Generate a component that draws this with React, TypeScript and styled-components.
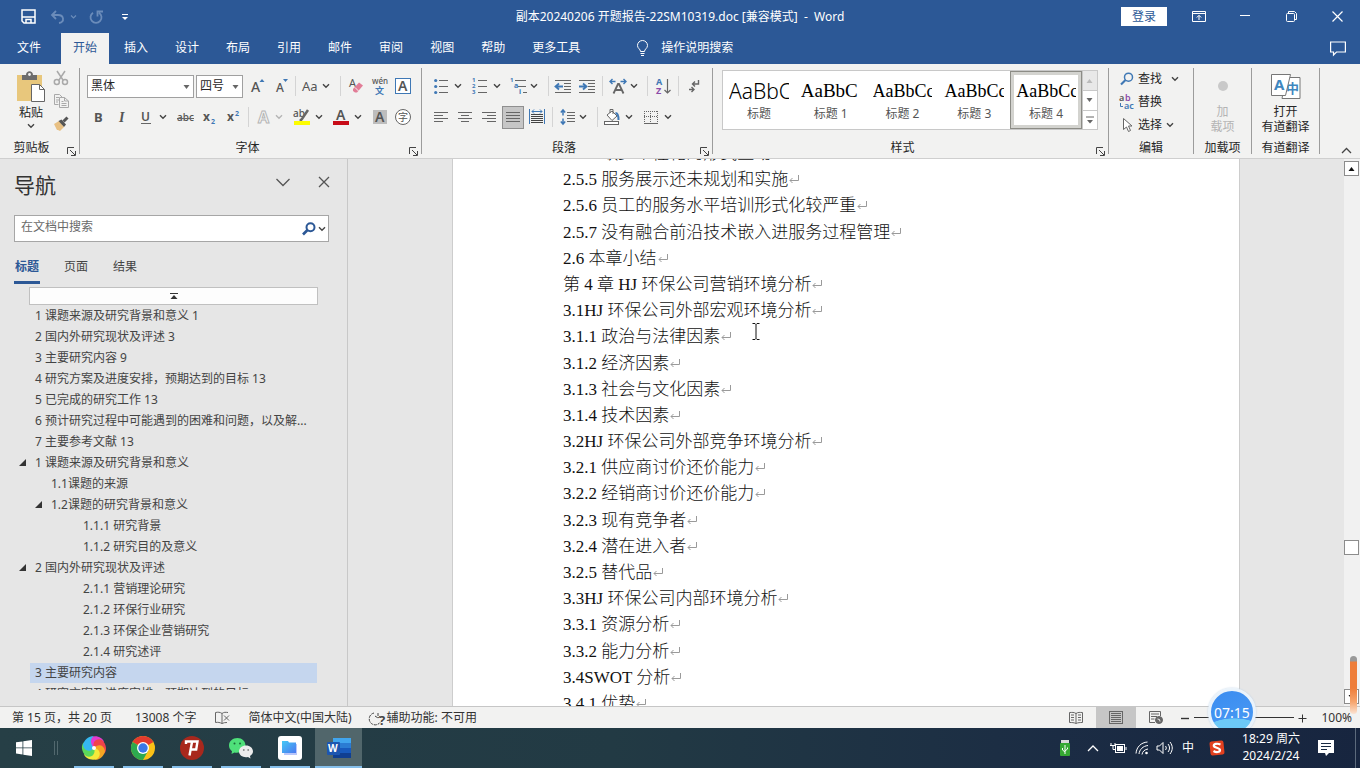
import React from 'react';
import styled, { createGlobalStyle, css } from 'styled-components';

const Global = createGlobalStyle`
  *, *::before, *::after { box-sizing: border-box; }
  html, body, #root { height: 100%; }
  body {
    margin: 0;
    background: #e6e6e6;
    color: #262626;
    font: 12px/16px "Noto Sans", "Noto Sans CJK SC", sans-serif;
  }
  button, input, select { font: inherit; color: inherit; margin: 0; padding: 0; border: 0; background: none; border-radius: 0; }
  h1, h2, ol, ul, p { margin: 0; padding: 0; font: inherit; list-style: none; }
  svg { display: block; flex: none; overflow: visible; }
`;

const Window = styled.div`
  height: 100vh;
  display: flex;
  flex-direction: column;
  overflow: hidden;
`;

/* ---------- title bar ---------- */
const TitleBar = styled.header`
  height: 33px;
  flex: none;
  display: grid;
  grid-template-columns: 1fr auto 1fr;
  align-items: center;
  background: #2c5896;
  color: #fff;
`;
const QuickAccess = styled.div`
  display: flex;
  align-items: center;
  gap: 14px;
  padding-left: 21px;
`;
const FileTitle = styled.h1`
  white-space: pre;
`;
const WindowControls = styled.div`
  display: flex;
  align-items: center;
  justify-content: flex-end;
`;
const SignIn = styled.button`
  width: 46px;
  height: 19px;
  margin-right: 9px;
  background: #fff;
  color: #2c5896;
  line-height: 19px;
`;
const WinButton = styled.button`
  width: 46px;
  height: 32px;
  display: flex;
  align-items: center;
  justify-content: center;
`;
const PlainButton = styled.button`
  display: flex;
  align-items: center;
  justify-content: center;
`;

/* ---------- tabs ---------- */
const TabBar = styled.nav`
  height: 31px;
  flex: none;
  display: flex;
  align-items: stretch;
  gap: 3px;
  padding: 0 14px 0 5px;
  background: #2c5896;
  color: #fff;
`;
const Tab = styled.button<{ $active?: boolean; $first?: boolean }>`
  padding: 0 12px 1px;
  margin-right: ${p => (p.$first ? '5px' : 0)};
  ${p => p.$active && css`background: #f2f2f1; color: #2c5896;`}
`;
const TellMe = styled.button`
  display: flex;
  align-items: center;
  gap: 12px;
  margin-left: 41px;
  padding-bottom: 1px;
`;
const CommentButton = styled(PlainButton)`
  margin-left: auto;
`;

/* ---------- ribbon ---------- */
const Ribbon = styled.section`
  height: 95px;
  flex: none;
  display: flex;
  padding: 4px 0;
  background: #f2f2f1;
  border-bottom: 1px solid #cfcfcf;
`;
const Group = styled.div<{ $w: number }>`
  width: ${p => p.$w}px;
  flex: none;
  display: flex;
  flex-direction: column;
  border-right: 1px solid #9c9c9c;
`;
const GroupBody = styled.div`
  flex: 1;
  min-height: 0;
`;
const Caption = styled.div<{ $shift: number }>`
  height: 14px;
  display: grid;
  grid-template-columns: minmax(0, 1fr) auto minmax(${p => p.$shift}px, 1fr);
  align-items: center;
  white-space: nowrap;
  ${p => p.$shift > 0 && css`
    grid-template-columns: minmax(0, 1fr) auto calc(50% - 18px + ${p.$shift}px);
  `}
`;
const Launcher = styled.button`
  grid-column: 3;
  justify-self: end;
  align-self: end;
  padding-right: 3px;
`;
const ToolRow = styled.div<{ $top: number }>`
  height: 24px;
  margin-top: ${p => p.$top}px;
  display: flex;
  align-items: center;
`;
const Tool = styled.button<{ $w: number; $gap: number; $on?: boolean }>`
  width: ${p => p.$w}px;
  height: 23px;
  margin-left: ${p => p.$gap}px;
  flex: none;
  display: flex;
  align-items: center;
  justify-content: center;
  ${p => p.$on && css`background: #c6c6c6; border: 1px solid #8f8f8f;`}
`;
const Sep = styled.span<{ $gap: number }>`
  width: 1px;
  height: 20px;
  margin-left: ${p => p.$gap}px;
  background: #d4d4d4;
`;
const Combo = styled.span<{ $w: number; $gap: number }>`
  position: relative;
  width: ${p => p.$w}px;
  margin-left: ${p => p.$gap}px;
  select {
    width: 100%;
    height: 23px;
    padding-left: 3px;
    appearance: none;
    background: #fff;
    border: 1px solid #a0a0a0;
  }
  svg { position: absolute; right: 4px; top: 10px; pointer-events: none; }
`;

const ClipBody = styled(GroupBody)`
  display: flex;
  gap: 7px;
  padding-left: 16px;
`;
const Paste = styled.button`
  display: flex;
  flex-direction: column;
  align-items: center;
  gap: 2px;
  width: 30px;
  padding-top: 3px;
  justify-content: flex-start;
`;
const ClipTools = styled.div`
  display: flex;
  flex-direction: column;
  gap: 7px;
  padding-top: 2px;
`;

const Gallery = styled.div`
  display: flex;
  height: 60px;
  margin: 2px 10px 0 9px;
  background: #fff;
  border: 1px solid #c8c8c8;
`;
const StyleCard = styled.button<{ $on?: boolean; $size: number; $sans?: boolean }>`
  flex: 1;
  min-width: 0;
  padding: 7px 6px 0;
  ${p => p.$on && css`border: 1px solid #8c8c86; box-shadow: inset 0 0 0 3px #d3d3cf; padding: 6px 5px 0;`}
  display: flex;
  flex-direction: column;
  justify-content: flex-start;
  color: #555;
  span {
    overflow: hidden;
    height: 28px;
    text-align: left;
    color: #000;
    font: ${p => p.$size}px/26px ${p => (p.$sans ? '"Noto Sans", sans-serif' : '"Liberation Serif", serif')};
    font-weight: ${p => (p.$sans ? 300 : 400)};
  }
  em { font-style: normal; text-align: center; }
`;
const GalleryScroll = styled.div`
  width: 15px;
  display: grid;
  grid-template-rows: 1fr 1fr 1fr;
  border-left: 1px solid #c8c8c8;
  button { display: flex; align-items: center; justify-content: center; }
  button + button { border-top: 1px solid #c8c8c8; }
  button:first-child { background: #e8e8e8; }
`;
const EditList = styled(GroupBody)`
  display: flex;
  flex-direction: column;
  padding-left: 11px;
`;
const EditItem = styled.button<{ $gap?: number }>`
  height: 23px;
  padding-bottom: 2px;
  display: flex;
  align-items: center;
  gap: 4px;
  svg:last-child:not(:first-child) { margin-left: ${p => p.$gap || 0}px; }
`;
const BigTool = styled.button<{ $muted?: boolean }>`
  width: 100%;
  display: flex;
  flex-direction: column;
  align-items: center;
  line-height: 15px;
  gap: 4px;
  padding-top: 5px;
  color: ${p => (p.$muted ? '#b4b4b4' : 'inherit')};
`;
const RibbonEnd = styled.div`
  flex: 1;
  display: flex;
  align-items: flex-end;
  justify-content: flex-end;
  padding: 0 8px 0 0;
`;

/* ---------- workspace ---------- */
const Workspace = styled.div`
  flex: 1;
  min-height: 0;
  display: flex;
`;
const NavPane = styled.aside`
  width: 348px;
  flex: none;
  display: flex;
  flex-direction: column;
  border-right: 1px solid #c8c8c8;
  color: #444;
`;
const NavHead = styled.div`
  display: flex;
  align-items: center;
  height: 48px;
  padding: 4px 17px 0 14px;
  gap: 28px;
  h2 { flex: 1; font-size: 21px; line-height: 28px; color: #333; }
  button { padding-bottom: 6px; }
`;
const SearchBox = styled.label`
  height: 27px;
  margin: 8px 18px 0 14px;
  padding: 0 2px 0 6px;
  display: flex;
  align-items: center;
  gap: 2px;
  background: #fff;
  border: 1px solid #a6a6a6;
  input { flex: 1; min-width: 0; outline: 0; padding-bottom: 3px; }
  input::placeholder { color: #6a6a6a; opacity: 1; }
`;
const NavTabs = styled.div`
  display: flex;
  gap: 23px;
  height: 42px;
  padding: 15px 14px 0;
`;
const NavTab = styled.button<{ $on?: boolean }>`
  width: 26px;
  height: 27px;
  padding-bottom: 5px;
  border-bottom: 3px solid ${p => (p.$on ? '#2c5896' : 'transparent')};
  color: ${p => (p.$on ? '#2c5896' : '#444')};
  font-weight: ${p => (p.$on ? 700 : 400)};
`;
const JumpTop = styled.button`
  height: 18px;
  margin: 3px 29px 0;
  flex: none;
  display: flex;
  align-items: center;
  justify-content: center;
  background: #fdfdfd;
  border: 1px solid #c0c0c0;
`;
const Tree = styled.ul`
  flex: 1;
  min-height: 0;
  overflow: hidden;
  margin: 0 30px 16px 0;
`;
const TreeItem = styled.li<{ $level: number; $on?: boolean }>`
  height: 21px;
  display: flex;
  align-items: center;
  gap: 10px;
  padding-left: ${p => [0, 19, 35, 67][p.$level]}px;
  line-height: 20px;
  background: ${p => (p.$on ? 'linear-gradient(to right, transparent 30px, #c5d6ee 30px) 0 1px / 100% 20px no-repeat' : 'none')};
  span { width: 6px; flex: none; }
  a { color: inherit; text-decoration: none; white-space: nowrap; }
`;

const Canvas = styled.main`
  flex: 1;
  min-width: 0;
  display: flex;
  justify-content: center;
  overflow: hidden;
`;
const Sheet = styled.article`
  position: relative;
  width: 788px;
  display: flex;
  background: #fff;
  border: solid #cdcdcd;
  border-width: 0 1px;
  overflow: hidden;
`;
const Lines = styled.ol`
  flex: 1;
  margin: -18px 0 -11px;
  padding-left: 110px;
  display: grid;
  grid-auto-rows: 1fr;
`;
const Line = styled.li`
  display: flex;
  align-items: center;
  color: #111;
  font: 17px/26px "Liberation Serif", "Noto Sans CJK SC", serif;
  font-weight: 300;
  white-space: pre;
`;
const TextCursor = styled.svg`
  position: absolute;
  left: 299px;
  top: 164px;
`;
const ScrollBar = styled.div`
  width: 16px;
  flex: none;
  display: flex;
  flex-direction: column;
  background: #f1f1f1;
  padding: 2px 1px 2px 0;
`;
const ScrollButton = styled.button`
  height: 15px;
  flex: none;
  display: flex;
  align-items: center;
  justify-content: center;
  background: #fff;
  border: 1px solid #8c8c8c;
`;
const Track = styled.div<{ $grow: number }>`
  flex: ${p => p.$grow};
`;

/* ---------- status bar ---------- */
const StatusBar = styled.footer`
  position: relative;
  height: 22px;
  flex: none;
  display: flex;
  align-items: center;
  padding: 0 8px 0 12px;
  background: #f2f2f1;
  border-top: 1px solid #c6c6c6;
  color: #333;
  white-space: nowrap;
`;
const StatusText = styled.span<{ $before?: number; $after?: number }>`
  margin: 0 ${p => p.$after || 0}px 0 ${p => p.$before || 0}px;
`;
const Spacer = styled.span`
  flex: 1;
`;
const ViewButton = styled.button<{ $on?: boolean }>`
  width: 40px;
  height: 21px;
  display: flex;
  align-items: center;
  justify-content: center;
  background: ${p => (p.$on ? '#c6c6c6' : 'none')};
`;
const ZoomLine = styled.input`
  appearance: none;
  width: 100px;
  height: 1px;
  margin: 0 4px 0 0;
  background: #333;
  &::-webkit-slider-thumb { appearance: none; width: 4px; height: 1px; background: #333; }
`;
const Timer = styled.div`
  position: absolute;
  right: 104px;
  bottom: -8px;
  width: 48px;
  height: 48px;
  border-radius: 50%;
  border: 3px solid #eaf3fb;
  box-shadow: 0 0 2px #b9cfe6;
  background: radial-gradient(ellipse 30px 14px at 55% 98%, #6cc9f7 96%, transparent), linear-gradient(160deg, #3a8cf0, #4b9bf4);
  color: #fff;
  font-size: 14px;
  line-height: 44px;
  text-align: center;
`;
const SideMeter = styled.div`
  position: absolute;
  right: 3px;
  bottom: 14px;
  width: 7px;
  height: 58px;
  border-radius: 4px;
  background: linear-gradient(#999 0 5px, #ee7d3a 6px 32px, #f6a56e 46px, #fbe3d3);
`;

/* ---------- task bar ---------- */
const TaskBar = styled.footer`
  position: relative;
  height: 40px;
  flex: none;
  display: flex;
  align-items: stretch;
  background: linear-gradient(to right, #263f46, #223a44 45%, #1b2c44 78%, #17253f);
  color: #fff;
`;
const Start = styled(PlainButton)`
  width: 48px;
`;
const Grip = styled.span`
  width: 4px;
  height: 14px;
  margin: 13px 12px 0 6px;
  border: solid #52686e;
  border-width: 0 1px;
`;
const TaskApp = styled.button<{ $on?: boolean }>`
  width: ${p => (p.$on ? 47 : 40)}px;
  margin: 0 ${p => (p.$on ? 0 : 5)}px 0 ${p => (p.$on ? 0 : 4)}px;
  display: flex;
  align-items: center;
  justify-content: center;
  border-bottom: 2px solid #86bfea;
  padding-top: 2px;
  background: ${p => (p.$on ? '#51666b' : 'none')};
`;
const Tray = styled.div`
  margin-left: auto;
  display: flex;
  align-items: center;
  padding-right: 4px;
`;
const TrayButton = styled.button<{ $w: number }>`
  width: ${p => p.$w}px;
  height: 40px;
  display: flex;
  align-items: center;
  justify-content: center;
`;
const Clock = styled.time`
  width: 74px;
  padding-bottom: 3px;
  text-align: center;
  line-height: 17px;
`;
const DesktopEdge = styled.span`
  width: 1px;
  height: 40px;
  margin-left: 11px;
  background: #5c6a7c;
`;

/* ---------- icons ---------- */
const Chev = ({ c = '#444' }: { c?: string }) => (
  <svg width="8" height="6" viewBox="0 0 8 6" fill="none" stroke={c} strokeWidth="1.4"><path d="M1 1.300l3 3 3-3" /></svg>
);
const Tri = ({ c = '#666', up = false }: { c?: string; up?: boolean }) => (
  <svg width="7" height="4" viewBox="0 0 7 4"><path d={up ? 'M0.500 4h6L3.500 0z' : 'M0.500 0h6L3.500 4z'} fill={c} /></svg>
);
const Glyph = ({ w, h = 18, children }: { w: number; h?: number; children: React.ReactNode }) => (
  <svg width={w} height={h} viewBox={`0 0 ${w} ${h}`} fill="none" stroke="#666" strokeWidth="1">{children}</svg>
);
const T = ({ x, y, s, c = '#555', w = 400, f = 'Noto Sans', i = false, children }: { x: number; y: number; s: number; c?: string; w?: number; f?: string; i?: boolean; children: string }) => (
  <text x={x} y={y} fontSize={s} fill={c} stroke="none" fontWeight={w} fontFamily={`"${f}", "Noto Sans CJK SC", sans-serif`} fontStyle={i ? 'italic' : 'normal'}>{children}</text>
);
const LauncherIcon = () => (
  <svg width="9" height="9" viewBox="0 0 9 9" fill="none" stroke="#444"><path d="M0.500 7V0.500H7M3 3l5 5M8.500 4v4.500H4" /></svg>
);
const rows = (x1: number, x2: number, ys: number[]) => ys.map(y => `M${x1} ${y}H${x2}`).join('');

const GroupCaption = ({ text, launch = true, shift = 0 }: { text: string; launch?: boolean; shift?: number }) => (
  <Caption $shift={shift}>
    <span />
    <span>{text}</span>
    {launch && <Launcher aria-label={`${text}设置`}><LauncherIcon /></Launcher>}
  </Caption>
);

const Clipboard = () => (
  <Group $w={80}>
    <ClipBody>
      <Paste>
        <svg width="30" height="32" viewBox="0 0 30 32">
          <rect x="1" y="4" width="25" height="26" fill="#e8c77c" />
          <path d="M6 4h4c0-5 7-5 7 0h4v5H6z" fill="#6d6d6d" /><circle cx="13.500" cy="3.500" r="1.400" fill="#f2f2f1" />
          <path d="M15.500 13.500h8l5 5v12h-13z" fill="#fff" stroke="#666" /><path d="M23.500 13.500v5h5" fill="none" stroke="#666" />
        </svg>
        <span>粘贴</span>
        <Chev />
      </Paste>
      <ClipTools>
        <PlainButton aria-label="剪切"><Glyph w={16} h={16}><g stroke="#a9a9a9" strokeWidth="1.500"><path d="M4 1l6 9M12 1L6 10" /><circle cx="3.800" cy="12" r="2.500" /><circle cx="12" cy="12" r="2.500" /></g></Glyph></PlainButton>
        <PlainButton aria-label="复制"><Glyph w={16} h={16}><g stroke="#a9a9a9"><path d="M5.500 11.500h-4v-10h5l3 3M3 4.500h3M3 7h3M3 9h2" /><path d="M6.500 4.500h5l4 3.500v6.500h-9zM11.500 4.500V8h4M8.500 8.500h2M8.500 10.500h5M8.500 12.500h5" /></g></Glyph></PlainButton>
        <PlainButton aria-label="格式刷"><Glyph w={16} h={16}><path d="M1 8l5-3 5 6-4 4-2-1-1 0z" fill="#e8c083" stroke="none" /><path d="M5.500 5l3-1.500 4.500 5-2 2.500z" fill="#555" stroke="none" /><path d="M10.500 5.500l4-4" stroke="#555" strokeWidth="3" /></Glyph></PlainButton>
      </ClipTools>
    </ClipBody>
    <GroupCaption text="剪贴板" shift={8} />
  </Group>
);

const FontGroup = () => (
  <Group $w={342}>
    <GroupBody>
      <ToolRow $top={6}>
        <Combo $w={107} $gap={7}><select aria-label="字体"><option>黑体</option></select><Tri /></Combo>
        <Combo $w={47} $gap={2}><select aria-label="字号"><option>四号</option></select><Tri /></Combo>
        <Tool $w={14} $gap={8} aria-label="增大字号"><Glyph w={14}><T x={0} y={15} s={14} w={500}>A</T><path d="M8.500 5L11 2l2.500 3z" fill="#3f78b5" stroke="none" /></Glyph></Tool>
        <Tool $w={13} $gap={11} aria-label="减小字号"><Glyph w={13}><T x={0} y={15} s={12} w={500}>A</T><path d="M7 2h5L9.500 5z" fill="#3f78b5" stroke="none" /></Glyph></Tool>
        <Sep $gap={6} />
        <Tool $w={17} $gap={6} aria-label="更改大小写"><Glyph w={17}><T x={0} y={14} s={13}>Aa</T></Glyph></Tool>
        <Tool $w={8} $gap={3} aria-label="大小写选项"><Chev /></Tool>
        <Sep $gap={10} />
        <Tool $w={16} $gap={7} aria-label="清除格式"><Glyph w={16}><T x={1} y={10} s={11}>A</T><path d="M5 12l6-6.500 4 3-6 7H7l-2-1.500z" fill="#e27d97" stroke="none" /><path d="M7 10.500l3.500 3.500" stroke="#f2f2f1" /></Glyph></Tool>
        <Tool $w={18} $gap={7} aria-label="拼音指南"><Glyph w={18}><T x={1} y={7} s={8} w={500}>wén</T><T x={4} y={17} s={9} c="#3f78b5" w={700}>文</T></Glyph></Tool>
        <Tool $w={16} $gap={6} aria-label="字符边框"><Glyph w={16}><rect x="0.500" y="1.500" width="15" height="15" stroke="#3f78b5" fill="#fff" /><T x={3} y={14} s={14} w={600}>A</T></Glyph></Tool>
      </ToolRow>
      <ToolRow $top={7}>
        <Tool $w={10} $gap={13} aria-label="加粗"><Glyph w={10}><T x={1} y={14} s={13} w={700}>B</T></Glyph></Tool>
        <Tool $w={8} $gap={15} aria-label="倾斜"><Glyph w={8}><T x={1} y={14} s={14} w={700} i f="Liberation Serif">I</T></Glyph></Tool>
        <Tool $w={10} $gap={15} aria-label="下划线"><Glyph w={10}><T x={0} y={13} s={12} w={600}>U</T><path d="M0 15.500h10" /></Glyph></Tool>
        <Tool $w={8} $gap={8} aria-label="下划线选项"><Chev /></Tool>
        <Tool $w={18} $gap={10} aria-label="删除线"><Glyph w={18}><T x={0} y={13} s={10} w={500}>abc</T><path d="M0 10.500h17" /></Glyph></Tool>
        <Tool $w={14} $gap={7} aria-label="下标"><Glyph w={14}><T x={1} y={13} s={12} w={700}>x</T><T x={9} y={16} s={7} c="#3f78b5" w={700}>2</T></Glyph></Tool>
        <Tool $w={14} $gap={10} aria-label="上标"><Glyph w={14}><T x={1} y={13} s={12} w={700}>x</T><T x={9} y={8} s={7} c="#3f78b5" w={700}>2</T></Glyph></Tool>
        <Sep $gap={8} />
        <Tool $w={14} $gap={8} aria-label="文本效果"><Glyph w={14}><text x="1" y="15" fontSize="16" fontWeight="700" fontFamily="Noto Sans" fill="#f7f7f7" stroke="#b5b5b5">A</text></Glyph></Tool>
        <Tool $w={8} $gap={4} aria-label="文本效果选项"><Chev c="#b5b5b5" /></Tool>
        <Tool $w={18} $gap={10} aria-label="突出显示"><Glyph w={18}><T x={0} y={9} s={10} w={500}>ab</T><path d="M15 2L9 11l-2 2" strokeWidth="2.500" /><rect x="1" y="13" width="16" height="4" fill="#fcfc00" stroke="none" /></Glyph></Tool>
        <Tool $w={8} $gap={4} aria-label="突出显示颜色"><Chev /></Tool>
        <Tool $w={16} $gap={10} aria-label="字体颜色"><Glyph w={16}><T x={3} y={12} s={14} w={600}>A</T><rect x="0" y="13" width="16" height="4" fill="#c80c18" stroke="none" /></Glyph></Tool>
        <Tool $w={8} $gap={5} aria-label="字体颜色选项"><Chev /></Tool>
        <Tool $w={16} $gap={10} aria-label="字符底纹"><Glyph w={16}><rect x="1" y="2" width="14" height="14" fill="#bdbdbd" stroke="none" /><T x={3} y={14} s={14} w={600}>A</T></Glyph></Tool>
        <Tool $w={18} $gap={6} aria-label="带圈字符"><Glyph w={18}><circle cx="9" cy="9" r="7.500" fill="#fff" /><T x={4} y={13} s={10}>字</T></Glyph></Tool>
      </ToolRow>
    </GroupBody>
    <GroupCaption text="字体" shift={9} />
  </Group>
);

const ParagraphGroup = () => (
  <Group $w={291}>
    <GroupBody>
      <ToolRow $top={6}>
        <Tool $w={14} $gap={12} aria-label="项目符号"><Glyph w={14}><path d={rows(5, 14, [3.5, 9.5, 15.5])} /><g fill="#3f78b5" stroke="none"><circle cx="1.700" cy="3.500" r="1.600" /><circle cx="1.700" cy="9.500" r="1.600" /><circle cx="1.700" cy="15.500" r="1.600" /></g></Glyph></Tool>
        <Tool $w={8} $gap={6} aria-label="项目符号选项"><Chev /></Tool>
        <Tool $w={16} $gap={10} aria-label="编号"><Glyph w={16}><path d={rows(6, 15, [3.5, 9.5, 15.5])} /><T x={0} y={5} s={6} c="#3f78b5" w={700}>1</T><T x={0} y={11} s={6} c="#3f78b5" w={700}>2</T><T x={0} y={17} s={6} c="#3f78b5" w={700}>3</T></Glyph></Tool>
        <Tool $w={8} $gap={5} aria-label="编号选项"><Chev /></Tool>
        <Tool $w={18} $gap={9} aria-label="多级列表"><Glyph w={18}><path d="M5 3.500h11M8 9.500h8M13 15.500h4" /><T x={0} y={5} s={6} c="#3f78b5" w={700}>1</T><T x={4} y={11} s={7} c="#3f78b5" w={700}>a</T><T x={9} y={17} s={7} c="#3f78b5" w={700}>i</T></Glyph></Tool>
        <Tool $w={8} $gap={2} aria-label="多级列表选项"><Chev /></Tool>
        <Sep $gap={10} />
        <Tool $w={18} $gap={5} aria-label="减少缩进量"><Glyph w={18}><path d={rows(1, 17, [3.5, 15.5]) + rows(10, 17, [6.5, 9.5, 12.5])} /><path d="M9 9.500H2M5 6.500l-3.500 3L5 12.500" stroke="#3f78b5" strokeWidth="1.800" /></Glyph></Tool>
        <Tool $w={18} $gap={6} aria-label="增加缩进量"><Glyph w={18}><path d={rows(1, 17, [3.5, 15.5]) + rows(10, 17, [6.5, 9.5, 12.5])} /><path d="M1 9.500h7M5 6.500l3.500 3-3.500 3" stroke="#3f78b5" strokeWidth="1.800" /></Glyph></Tool>
        <Sep $gap={6} />
        <Tool $w={18} $gap={6} aria-label="中文版式"><Glyph w={18}><path d="M4.500 16.500L9 7h1l4.500 9.500M6.500 13h6" strokeWidth="1.800" /><path d="M1 4.500h5.500M3.500 2L1 4.500 3.500 7M17 4.500h-5.500M14.500 2L17 4.500 14.500 7" stroke="#3f78b5" strokeWidth="1.400" /></Glyph></Tool>
        <Tool $w={8} $gap={3} aria-label="中文版式选项"><Chev /></Tool>
        <Sep $gap={9} />
        <Tool $w={16} $gap={8} aria-label="排序"><Glyph w={16}><T x={0} y={8} s={9} c="#3f78b5" w={700}>A</T><T x={0} y={17} s={9} c="#8b4aa8" w={700}>Z</T><path d="M11.500 2v14M8.500 13l3 3 3-3" strokeWidth="1.200" /></Glyph></Tool>
        <Sep $gap={6} />
        <Tool $w={12} $gap={9} aria-label="显示编辑标记"><Glyph w={12}><path d="M10.500 3v4H5M7 4.500L4.500 7 7 9.500M1 12.500h5M3.500 10l2.500 2.500L3.500 15" strokeWidth="1.400" /></Glyph></Tool>
      </ToolRow>
      <ToolRow $top={7}>
        <Tool $w={14} $gap={12} aria-label="左对齐"><Glyph w={14}><path d={rows(0, 14, [4.5, 10.5]) + rows(0, 9, [7.5, 13.5])} /></Glyph></Tool>
        <Tool $w={14} $gap={10} aria-label="居中"><Glyph w={14}><path d={rows(0, 14, [4.5, 10.5]) + rows(3, 11, [7.5, 13.5])} /></Glyph></Tool>
        <Tool $w={14} $gap={10} aria-label="右对齐"><Glyph w={14}><path d={rows(0, 14, [4.5, 10.5]) + rows(5, 14, [7.5, 13.5])} /></Glyph></Tool>
        <Tool $w={22} $gap={6} $on aria-label="两端对齐"><Glyph w={14}><path d={rows(0, 14, [4.5, 7.5, 10.5, 13.5])} /></Glyph></Tool>
        <Tool $w={16} $gap={5} aria-label="分散对齐"><Glyph w={16}><path d={rows(2, 14, [6.5, 8.5, 10.5, 12.5, 14.5])} stroke="#444" /><path d="M0.500 1v15M15.500 1v15M3 3.500h10M5 1.500L3 3.500 5 5.500M11 1.500L13 3.500 11 5.500" stroke="#3f78b5" /></Glyph></Tool>
        <Sep $gap={7} />
        <Tool $w={16} $gap={7} aria-label="行距"><Glyph w={16}><path d={rows(7, 15, [4.5, 7.5, 10.5, 13.5])} /><path d="M3 2.500v5M0.800 4.500L3 2l2.200 2.500M3 10.500v5M0.800 13.500L3 16l2.200-2.500" stroke="#3f78b5" strokeWidth="1.500" /></Glyph></Tool>
        <Tool $w={8} $gap={3} aria-label="行距选项"><Chev /></Tool>
        <Sep $gap={10} />
        <Tool $w={18} $gap={5} aria-label="底纹"><Glyph w={18}><path d="M4 7l5-4 5 5-5 4.500zM7 5V1.500h3V6" fill="#fff" /><path d="M12.500 5c2 0 3 3 3 7" stroke="#3f78b5" strokeWidth="2" /><rect x="1.500" y="13.500" width="14" height="3" fill="#fff" /></Glyph></Tool>
        <Tool $w={8} $gap={4} aria-label="底纹选项"><Chev /></Tool>
        <Tool $w={14} $gap={11} aria-label="边框"><Glyph w={14}><path d="M0.500 3v12M13.500 3v12M6.500 3v12M0 3.500h14M0 8.500h14" strokeDasharray="1 1" /><path d="M0 15.500h14" /></Glyph></Tool>
        <Tool $w={8} $gap={6} aria-label="边框选项"><Chev /></Tool>
      </ToolRow>
    </GroupBody>
    <GroupCaption text="段落" shift={9} />
  </Group>
);

const styleCards = [
  { name: '标题', sample: 'AaBbC', size: 21, sans: true },
  { name: '标题 1', sample: 'AaBbC', size: 19 },
  { name: '标题 2', sample: 'AaBbCc', size: 18 },
  { name: '标题 3', sample: 'AaBbCc', size: 18 },
  { name: '标题 4', sample: 'AaBbCc', size: 18, on: true },
];

const StylesGroup = () => (
  <Group $w={396}>
    <GroupBody>
      <Gallery>
        {styleCards.map(s => (
          <StyleCard key={s.name} $on={s.on} $size={s.size} $sans={s.sans}><span>{s.sample}</span><em>{s.name}</em></StyleCard>
        ))}
        <GalleryScroll>
          <button aria-label="上一行"><Tri up c="#bbb" /></button>
          <button aria-label="下一行"><Tri /></button>
          <button aria-label="其他样式"><svg width="8" height="8" viewBox="0 0 8 8"><path d="M0 1h8" stroke="#666" /><path d="M1 4h6L4 7.500z" fill="#666" /></svg></button>
        </GalleryScroll>
      </Gallery>
    </GroupBody>
    <GroupCaption text="样式" shift={14} />
  </Group>
);

const Magnifier = ({ c, w = 2 }: { c: string; w?: number }) => (
  <svg width="14" height="14" viewBox="0 0 14 14" fill="none" stroke={c} strokeWidth={w}><circle cx="8.500" cy="5.200" r="4" /><path d="M5.500 8L1 12.500" strokeWidth={w + 0.6} /></svg>
);

const EditGroup = () => (
  <Group $w={85}>
    <EditList>
      <EditItem $gap={5}><Magnifier c="#3f78b5" w={1.5} />查找<Chev /></EditItem>
      <EditItem>
        <Glyph w={14} h={16}><T x={-1} y={7} s={9} w={600}>a</T><T x={5} y={7} s={9} c="#8b4aa8" w={600}>b</T><T x={4} y={15} s={9} c="#3f78b5" w={600}>ac</T><path d="M0.500 9v3.500H3" stroke="#3f78b5" /></Glyph>
        替换
      </EditItem>
      <EditItem><Glyph w={14} h={16}><path d="M3.500 1.500v11l3-2.500 2 4.500 2-1-2-4.500h3.500z" fill="#fff" /></Glyph>选择<Chev /></EditItem>
    </EditList>
    <GroupCaption text="编辑" launch={false} />
  </Group>
);

const RibbonBar = () => (
  <Ribbon>
    <Clipboard />
    <FontGroup />
    <ParagraphGroup />
    <StylesGroup />
    <EditGroup />
    <Group $w={58}>
      <GroupBody>
        <BigTool $muted>
          <svg width="30" height="27" viewBox="0 0 30 27"><circle cx="15" cy="13" r="5" fill="#c9c9c9" /></svg>
          <span>加<br />载项</span>
        </BigTool>
      </GroupBody>
      <GroupCaption text="加载项" launch={false} />
    </Group>
    <Group $w={68}>
      <GroupBody>
        <BigTool>
          <svg width="30" height="27" viewBox="0 0 30 27" fill="#fff" stroke="#777">
            <path d="M15 4.500h14v21H11z" /><T x={15} y={20} s={13} c="#3f87bf" w={700}>中</T>
            <path d="M0.500 1.500h19l-5 21H0.500z" /><T x={3} y={17} s={15} c="#3f87bf" w={700}>A</T>
          </svg>
          <span>打开<br />有道翻译</span>
        </BigTool>
      </GroupBody>
      <GroupCaption text="有道翻译" launch={false} />
    </Group>
    <RibbonEnd>
      <PlainButton aria-label="折叠功能区"><svg width="11" height="7" viewBox="0 0 11 7" fill="none" stroke="#444" strokeWidth="1.300"><path d="M1 6l4.500-4.500L10 6" /></svg></PlainButton>
    </RibbonEnd>
  </Ribbon>
);

const tree = [
  { t: '1 课题来源及研究背景和意义 1', l: 1 },
  { t: '2 国内外研究现状及评述 3', l: 1 },
  { t: '3 主要研究内容 9', l: 1 },
  { t: '4 研究方案及进度安排，预期达到的目标 13', l: 1 },
  { t: '5 已完成的研究工作 13', l: 1 },
  { t: '6 预计研究过程中可能遇到的困难和问题，以及解...', l: 1 },
  { t: '7 主要参考文献 13', l: 1 },
  { t: '1 课题来源及研究背景和意义', l: 1, open: true },
  { t: '1.1课题的来源', l: 2 },
  { t: '1.2课题的研究背景和意义', l: 2, open: true },
  { t: '1.1.1 研究背景', l: 3 },
  { t: '1.1.2 研究目的及意义', l: 3 },
  { t: '2 国内外研究现状及评述', l: 1, open: true },
  { t: '2.1.1 营销理论研究', l: 3 },
  { t: '2.1.2 环保行业研究', l: 3 },
  { t: '2.1.3 环保企业营销研究', l: 3 },
  { t: '2.1.4 研究述评', l: 3 },
  { t: '3 主要研究内容', l: 1, on: true },
  { t: '4 研究方案及进度安排，预期达到的目标', l: 1 },
];

const Navigation = () => (
  <NavPane>
    <NavHead>
      <h2>导航</h2>
      <PlainButton aria-label="任务窗格选项"><svg width="14" height="9" viewBox="0 0 14 9" fill="none" stroke="#555" strokeWidth="1.300"><path d="M0.500 1L7 7.500 13.500 1" /></svg></PlainButton>
      <PlainButton aria-label="关闭"><svg width="12" height="12" viewBox="0 0 12 12" fill="none" stroke="#555" strokeWidth="1.300"><path d="M1 1l10 10M11 1L1 11" /></svg></PlainButton>
    </NavHead>
    <SearchBox>
      <input type="text" placeholder="在文档中搜索" aria-label="在文档中搜索" />
      <Magnifier c="#2c5896" />
      <Chev />
    </SearchBox>
    <NavTabs>
      <NavTab $on>标题</NavTab>
      <NavTab>页面</NavTab>
      <NavTab>结果</NavTab>
    </NavTabs>
    <JumpTop aria-label="跳转到开头"><svg width="8" height="7" viewBox="0 0 8 7"><path d="M0 0.500h8" stroke="#333" /><path d="M0.500 6h7L4 2z" fill="#333" /></svg></JumpTop>
    <Tree>
      {tree.map((n, i) => (
        <TreeItem key={i} $level={n.l} $on={n.on}>
          <span>{n.open && <svg width="7" height="7" viewBox="0 0 7 7"><path d="M7 0v7H0z" fill="#333" /></svg>}</span>
          <a href="#heading">{n.t}</a>
        </TreeItem>
      ))}
    </Tree>
  </NavPane>
);

const docLines = [
  '2.5.4 缺少个性化的形式互动',
  '2.5.5 服务展示还未规划和实施',
  '2.5.6 员工的服务水平培训形式化较严重',
  '2.5.7 没有融合前沿技术嵌入进服务过程管理',
  '2.6 本章小结',
  '第 4 章 HJ 环保公司营销环境分析',
  '3.1HJ 环保公司外部宏观环境分析',
  '3.1.1 政治与法律因素',
  '3.1.2 经济因素',
  '3.1.3 社会与文化因素',
  '3.1.4 技术因素',
  '3.2HJ 环保公司外部竞争环境分析',
  '3.2.1 供应商讨价还价能力',
  '3.2.2 经销商讨价还价能力',
  '3.2.3 现有竞争者',
  '3.2.4 潜在进入者',
  '3.2.5 替代品',
  '3.3HJ 环保公司内部环境分析',
  '3.3.1 资源分析',
  '3.3.2 能力分析',
  '3.4SWOT 分析',
  '3.4.1 优势',
];

const Return = () => (
  <svg width="12" height="12" viewBox="0 0 12 12" fill="none" stroke="#9a9a9a"><path d="M10.500 1v5.500H2M4.500 4L2 6.500 4.500 9" /></svg>
);

const Document = () => (
  <Canvas>
    <Sheet>
      <Lines>{docLines.map(t => <Line key={t}>{t}<Return /></Line>)}</Lines>
      <TextCursor width="8" height="17" viewBox="0 0 8 17" fill="none" stroke="#111"><path d="M0.500 0.500h2.500l1 1 1-1h2.500M4 1.500v14M0.500 16.500h2.500l1-1 1 1h2.500" /></TextCursor>
    </Sheet>
  </Canvas>
);

const Status = () => (
  <StatusBar>
    <StatusText $after={23}>第 15 页，共 20 页</StatusText>
    <StatusText $after={19}>13008 个字</StatusText>
    <PlainButton aria-label="校对"><Glyph w={16} h={14}><path d="M7 12.500V2.500C5 1 3 1 0.500 1.500v10c2.500-0.500 4.500 0 6.500 1 1.500-0.800 3-1 5-1M7 2.500c2-1.500 3.500-1.300 6-1M9 4.500l5 5M14 4.500l-5 5" /></Glyph></PlainButton>
    <StatusText $before={17} $after={18}>简体中文(中国大陆)</StatusText>
    <Glyph w={17} h={16}><path d="M4 3a6 6 0 1 0 6 9.500M5 6l3 2 2-1.500M8 3v5" strokeDasharray="3 1" stroke="#444" /><T x={9} y={15} s={13} w={700} c="#444">?</T></Glyph>
    <StatusText>辅助功能: 不可用</StatusText>
    <Spacer />
    <ViewButton aria-label="阅读视图"><Glyph w={14} h={12}><path d="M7 1.500C5 0 3 0.500 0.500 0.500v10c2.500 0 4.500 0 6.500 1 2-1 4-1 6.500-1v-10C11 0.500 9 0 7 1.500zM7 1v10M2 3h3M2 5.500h3M2 8h3M9 3h3M9 5.500h3M9 8h3" /></Glyph></ViewButton>
    <ViewButton $on aria-label="页面视图"><Glyph w={14} h={13}><rect x="0.500" y="0.500" width="13" height="12" /><path d={rows(2, 12, [2.5, 4.5, 6.5, 8.5, 10.5])} /></Glyph></ViewButton>
    <ViewButton aria-label="Web 版式视图"><Glyph w={14} h={13}><path d="M6 11.500H0.500v-11h11V5M2 3h8M2 5.500h6M2 8h3.500" /><circle cx="10" cy="9" r="3.500" fill="#666" /><path d="M8.500 8l2 0.500 0.500 2" stroke="#eee" /></Glyph></ViewButton>
    <PlainButton aria-label="缩小"><Glyph w={18} h={10}><path d="M5 5.500h8" stroke="#333" strokeWidth="1.400" /></Glyph></PlainButton>
    <ZoomLine type="range" aria-label="显示比例" />
    <PlainButton aria-label="放大"><Glyph w={9} h={10}><path d="M0.500 5.500h8M4.500 1.500v8" stroke="#333" /></Glyph></PlainButton>
    <StatusText $before={14}>100%</StatusText>
    <Timer>07:15</Timer>
    <SideMeter />
  </StatusBar>
);

const petals = ['#e23bd0', '#f0444a', '#f6a623', '#f5ea3a', '#5bd75b', '#35b8f0'];

const Tasks = () => (
  <TaskBar>
    <Start aria-label="开始菜单"><svg width="16" height="16" viewBox="0 0 16 16" fill="#fff"><path d="M0 2.300l6.500-.9v6.100H0zM7.300 1.300L16 0v7.500H7.300zM0 8.300h6.500v6.200L0 13.600zM7.300 8.300H16V16l-8.700-1.300z" /></svg></Start>
    <Grip />
    <TaskApp aria-label="浏览器">
      <svg width="24" height="24" viewBox="-12 -12 24 24">{petals.map((c, i) => <path key={c} d="M0 0C-6-1-8-7-3-11 3-13 9-10 10-6 6-8 2-6 0 0z" fill={c} transform={`rotate(${i * 60})`} />)}<circle r="2" fill="#fff" /></svg>
    </TaskApp>
    <TaskApp aria-label="Chrome">
      <svg width="24" height="24" viewBox="0 0 24 24"><circle cx="12" cy="12" r="12" fill="#fbc116" /><path d="M12 12L1.600 6A12 12 0 0 1 22.400 6z" fill="#e33b2e" /><path d="M12 12L1.600 6A12 12 0 0 0 12 24l5-9z" fill="#2da94f" /><circle cx="12" cy="12" r="6" fill="#fff" /><circle cx="12" cy="12" r="4.700" fill="#3b78e7" /></svg>
    </TaskApp>
    <TaskApp aria-label="P">
      <svg width="24" height="24" viewBox="0 0 24 24"><circle cx="12" cy="12" r="12" fill="#a8281d" /><path d="M6 8V5.500h11.500l-1.300 8H11M12 6L9.500 19.500" fill="none" stroke="#fff" strokeWidth="2.400" /></svg>
    </TaskApp>
    <TaskApp aria-label="微信">
      <svg width="26" height="22" viewBox="0 0 26 22"><path d="M9.500 1C4.500 1 1 4.400 1 8.500c0 2.400 1.200 4.400 3 5.700L3.500 17l3-1.500c5 1 11-1.500 11-7C17.500 4.400 14 1 9.500 1z" fill="#4fe07a" /><circle cx="6.500" cy="6.500" r="1" fill="#1b6b38" /><circle cx="12" cy="6.500" r="1" fill="#1b6b38" /><path d="M18 8.500c-4 0-7 2.600-7 6 0 4 4.500 6.500 9 5.500l2.500 1.500-.5-2.500c1.800-1.200 3-2.700 3-4.500 0-3.400-3-6-7-6z" fill="#ececec" /><circle cx="15.800" cy="13" r=".9" fill="#888" /><circle cx="20.200" cy="13" r=".9" fill="#888" /></svg>
    </TaskApp>
    <TaskApp aria-label="文件">
      <svg width="24" height="24" viewBox="0 0 24 24"><defs><linearGradient id="fold" x1="0" y1="0" x2="1" y2="1"><stop offset="0" stopColor="#45c9f5" /><stop offset="1" stopColor="#4b79f0" /></linearGradient></defs><rect width="24" height="24" rx="3" fill="#fff" /><path d="M7 8h12v11H6z" fill="#b9c6fa" /><path d="M4 5h6l1 1.500h7V17H4z" fill="url(#fold)" /></svg>
    </TaskApp>
    <TaskApp $on aria-label="Word">
      <svg width="24" height="22" viewBox="0 0 24 22"><path d="M6 1h18v5H6z" fill="#41a5ee" /><path d="M6 6h18v5H6z" fill="#2b7cd3" /><path d="M6 11h18v5H6z" fill="#185abd" /><path d="M6 16h18v5H6z" fill="#103f91" /><rect x="0" y="5" width="13" height="13" rx="1" fill="#1d56b0" /><T x={1} y={15} s={10} w={700} c="#fff">W</T></svg>
    </TaskApp>
    <Tray>
      <TrayButton $w={28} aria-label="USB"><svg width="12" height="16" viewBox="0 0 12 16"><rect x="2" y="0" width="8" height="4" fill="#d8d8d8" /><rect x="1" y="3" width="10" height="13" rx="1" fill="#35a832" /><path d="M6 5v9M3.500 8v2L6 12M8.500 7.500V9L6 11" stroke="#fff" fill="none" /></svg></TrayButton>
      <TrayButton $w={27} aria-label="显示隐藏的图标"><svg width="12" height="8" viewBox="0 0 12 8" fill="none" stroke="#fff" strokeWidth="1.300"><path d="M1 7l5-5 5 5" /></svg></TrayButton>
      <TrayButton $w={24} aria-label="电池"><svg width="17" height="12" viewBox="0 0 17 12" fill="none" stroke="#fff"><rect x="5.500" y="2.500" width="9" height="8" /><path d="M7 4h6v5H7z" fill="#fff" stroke="none" /><path d="M16 5v3M1 1v2.500h4V1M3 3.500v4h2M0 3.500h6" /></svg></TrayButton>
      <TrayButton $w={23} aria-label="网络"><svg width="14" height="14" viewBox="0 0 14 14" fill="none" stroke="#fff"><path d="M1 12.500C1.500 6 6 1.500 12.500 1M4 13c.5-4.500 4-8 9-8.500M7 13.500C7.500 10.500 9.500 8.500 13 8" /><circle cx="11.500" cy="12" r="1.300" fill="#fff" stroke="none" /></svg></TrayButton>
      <TrayButton $w={23} aria-label="音量"><svg width="17" height="14" viewBox="0 0 17 14" fill="none" stroke="#fff"><path d="M1 5h2.500l3.500-3.500v11L3.500 9H1zM9.500 5c1 1.300 1 2.700 0 4M12 3c2 2.600 2 5.400 0 8M14 1c3 4 3 8 0 12" /></svg></TrayButton>
      <TrayButton $w={24} aria-label="输入法">中</TrayButton>
      <TrayButton $w={34} aria-label="搜狗输入法"><svg width="16" height="16" viewBox="0 0 16 16"><rect x="1" y="1" width="14" height="14" rx="2" fill="#e2401f" transform="rotate(-6 8 8)" /><path d="M11.500 4.500C8 3 4.500 4 4.800 6s6.200 1.500 6.200 4-4 2.500-6.500 1" fill="none" stroke="#fff" strokeWidth="2.200" /></svg></TrayButton>
      <Clock>18:29 周六<br />2024/2/24</Clock>
      <TrayButton $w={36} aria-label="通知"><svg width="16" height="16" viewBox="0 0 16 16"><path d="M0 0h16v13h-5l-3 3-1-3H0z" fill="#fff" /><path d="M3 3.500h10M3 6.500h10M3 9.500h6" stroke="#1a2a42" /></svg></TrayButton>
      <DesktopEdge />
    </Tray>
  </TaskBar>
);

export default function App() {
  return (
    <Window>
      <Global />
      <TitleBar>
        <QuickAccess>
          <PlainButton aria-label="保存"><svg width="15" height="15" viewBox="0 0 15 15" fill="none" stroke="#fff" strokeWidth="1.500"><path d="M1 1h13v13H3l-2-2zM1 8h13M5 14v-3.500h5V14" /></svg></PlainButton>
          <PlainButton aria-label="撤销"><svg width="25" height="14" viewBox="0 0 25 14" fill="none" stroke="#6b8cba" strokeWidth="1.800"><path d="M6 1L2 5l4 4M2 5h6c6 0 7 7 1 8" /><path d="M21 5.500l2.500 2.500L26 5.500" strokeWidth="1.200" /></svg></PlainButton>
          <PlainButton aria-label="重复"><svg width="15" height="14" viewBox="0 0 15 14" fill="none" stroke="#6b8cba" strokeWidth="1.800"><path d="M4 2.700a5.500 5.500 0 1 0 6 0M8.500 6.500V1.500H14" /></svg></PlainButton>
          <PlainButton aria-label="自定义快速访问工具栏"><svg width="11" height="8" viewBox="0 0 11 8"><path d="M4 1.500h6" stroke="#fff" /><path d="M4 4h6l-3 3z" fill="#fff" /></svg></PlainButton>
        </QuickAccess>
        <FileTitle>副本20240206 开题报告-22SM10319.doc [兼容模式]  -  Word</FileTitle>
        <WindowControls>
          <SignIn>登录</SignIn>
          <WinButton aria-label="功能区显示选项"><svg width="14" height="11" viewBox="0 0 14 11" fill="none" stroke="#fff"><path d="M0.500 0.500h13v10H0.500zM0.500 2.500h13M7 9V4.500M4.800 6.500L7 4.300l2.200 2.200" /></svg></WinButton>
          <WinButton aria-label="最小化"><svg width="10" height="4" viewBox="0 0 10 4"><path d="M0 0.500h10" stroke="#fff" /></svg></WinButton>
          <WinButton aria-label="还原"><svg width="11" height="11" viewBox="0 0 11 11" fill="none" stroke="#fff"><rect x="0.500" y="2.500" width="8" height="8" rx="1" /><path d="M2.500 2.500v-2h6l2 2v6h-2" /></svg></WinButton>
          <WinButton aria-label="关闭窗口"><svg width="11" height="11" viewBox="0 0 11 11" stroke="#fff" strokeWidth="1.200"><path d="M0.500 0.500l10 10M10.500 0.500l-10 10" /></svg></WinButton>
        </WindowControls>
      </TitleBar>
      <TabBar>
        <Tab $first>文件</Tab>
        <Tab $active>开始</Tab>
        {['插入', '设计', '布局', '引用', '邮件', '审阅', '视图', '帮助', '更多工具'].map(t => <Tab key={t}>{t}</Tab>)}
        <TellMe>
          <svg width="13" height="16" viewBox="0 0 13 16" fill="none" stroke="#fff"><path d="M4.500 11.500c0-2.500-3-3-3-6a5 5 0 0 1 10 0c0 3-3 3.500-3 6zM4.500 13.500h4M5 15.500h3" /></svg>
          操作说明搜索
        </TellMe>
        <CommentButton aria-label="批注"><svg width="16" height="15" viewBox="0 0 16 15" fill="none" stroke="#fff" strokeWidth="1.200"><path d="M0.600 1h14.800v10H6.500L3.500 14v-3H0.600z" /></svg></CommentButton>
      </TabBar>
      <RibbonBar />
      <Workspace>
        <Navigation />
        <Document />
        <ScrollBar>
          <ScrollButton aria-label="向上滚动"><Tri up c="#111" /></ScrollButton>
          <Track $grow={364} />
          <ScrollButton aria-label="滚动块" />
          <Track $grow={134} />
          <ScrollButton aria-label="向下滚动"><Tri c="#111" /></ScrollButton>
        </ScrollBar>
      </Workspace>
      <Status />
      <Tasks />
    </Window>
  );
}
